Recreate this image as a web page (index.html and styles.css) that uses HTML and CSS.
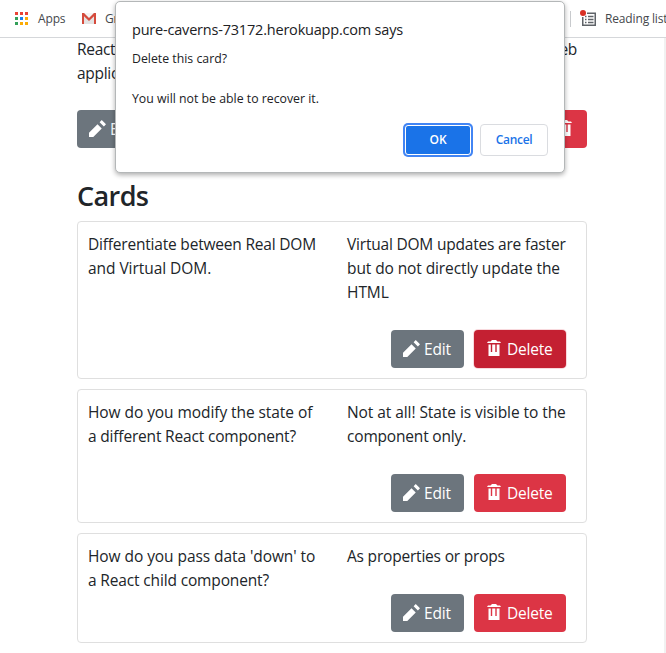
FILE: index.html
```html
<!DOCTYPE html>
<html lang="en">
<head>
<meta charset="utf-8">
<title>Deck</title>
<link rel="stylesheet" href="styles.css">
</head>
<body>
<svg class="defs" aria-hidden="true">
<symbol id="pencil" viewBox="0 0 8 8"><path d="M6 0l-1 1 2 2 1-1-2-2zm-2 2l-4 4v2h2l4-4-2-2z"/></symbol>
<symbol id="trash" viewBox="0 0 16 16"><path d="M5 0h4l1.500 1.500H13L14 3H0l1-1.500h2.500zM1.500 4.500h2.300V12h1.400V4.500h3.100V12h1.400V4.500H12.500V16h-11z"/></symbol>
</svg>
<header class="bookmarks">
<svg class="apps" width="13" height="13" viewBox="0 0 13 13" shape-rendering="crispEdges">
<path fill="#ea4335" d="M0 0h3v3H0zM5 0h3v3H5zM10 0h3v3h-3z"/>
<path fill="#34a05a" d="M0 5h3v3H0zM0 10h3v3H0z"/><path fill="#1a82f0" d="M5 5h3v3H5z"/>
<path fill="#fbab05" d="M10 5h3v3h-3zM5 10h3v3H5zM10 10h3v3h-3z"/>
</svg>
<span class="bm apps-label">Apps</span>
<svg class="gmail" width="14" height="11" viewBox="0 0 14 11"><path fill="#e3e3e3" d="M1 0h12v11H1z"/><path fill="#f5f5f5" d="M2 0h10L7 5z"/><path fill="#d54b3d" d="M0 0h2l5 5 5-5h2v11h-2V3.300L7 8 2 3.300V11H0z"/></svg>
<span class="bm">Gmail</span>
<span class="divider"></span>
<svg class="reading" width="17" height="17" viewBox="0 0 17 17"><path fill="none" stroke="#5f6368" stroke-width="1.500" d="M7 3.250h8.250v12H2.750V7"/><path stroke="#5f6368" stroke-width="1.300" d="M5 6.500h1.500M8 6.500h5.500M5 9.500h1.500M8 9.500h5.500M5 12.500h1.500M8 12.500h5.500"/><circle cx="3" cy="3" r="3" fill="#d93025"/></svg>
<span class="bm reading-label">Reading list</span>
</header>
<main>
<div class="intro"><span class="line">React</span><span class="line">web</span></div>
<div class="intro"><span class="line">application</span></div>
<div class="deck-actions">
<button class="btn edit"><svg><use href="#pencil"/></svg><span>Edit</span></button>
<button class="btn delete icon-only"><svg><use href="#trash"/></svg></button>
</div>
<h2>Cards</h2>
<article class="card tall">
<p class="front"><span class="line l1">Differentiate between Real DOM</span><span class="line l2">and Virtual DOM.</span></p>
<p class="back"><span class="line l3">Virtual DOM updates are faster</span><span class="line l4">but do not directly update the</span><span class="line l5">HTML</span></p>
<div class="actions"><button class="btn edit"><svg><use href="#pencil"/></svg><span>Edit</span></button><button class="btn delete active"><svg><use href="#trash"/></svg><span>Delete</span></button></div>
</article>
<article class="card medium">
<p class="front"><span class="line l6">How do you modify the state of</span><span class="line l7">a different React component?</span></p>
<p class="back"><span class="line l8">Not at all! State is visible to the</span><span class="line l9">component only.</span></p>
<div class="actions"><button class="btn edit"><svg><use href="#pencil"/></svg><span>Edit</span></button><button class="btn delete"><svg><use href="#trash"/></svg><span>Delete</span></button></div>
</article>
<article class="card short">
<p class="front"><span class="line l10">How do you pass data 'down' to</span><span class="line l11">a React child component?</span></p>
<p class="back"><span class="line l12">As properties or props</span></p>
<div class="actions"><button class="btn edit"><svg><use href="#pencil"/></svg><span>Edit</span></button><button class="btn delete"><svg><use href="#trash"/></svg><span>Delete</span></button></div>
</article>
</main>
<div class="scrollbar"></div>
<section class="dialog" role="dialog">
<h1>pure-caverns-73172.herokuapp.com says</h1>
<p>Delete this card?</p>
<p class="second">You will not be able to recover it.</p>
<div class="dialog-actions"><button class="ok">OK</button><button class="cancel">Cancel</button></div>
</section>
</body>
</html>
```
FILE: styles.css
```css
* { box-sizing: border-box; }
body { margin: 0; width: 666px; height: 653px; overflow: hidden; position: relative; background: #fff; color: #212529; font: 15.5px/24px "Open Sans", "Noto Sans", sans-serif; }
button { font: inherit; margin: 0; }
p, h1, h2 { margin: 0; }
.defs { display: none; }
.bookmarks { height: 38px; border-bottom: 1px solid #d5d7da; display: flex; align-items: center; padding-left: 15px; overflow: hidden; }
.bookmarks svg { flex: none; }
.bm { font-size: 12px; color: #45484c; white-space: nowrap; letter-spacing: -.15px; }
.apps-label { margin-left: 10px; width: 44px; }
.gmail { margin-right: 9px; }
.divider { width: 1px; height: 16px; background: #c8cacd; margin-left: auto; flex: none; }
.reading { margin-left: 9px; margin-right: 8px; }
.reading-label { width: 61px; flex: none; }
main { width: 510px; margin-left: 77px; }
.line { display: block; width: max-content; white-space: nowrap; letter-spacing: -.3px; }
.l1, .l3, .l12 { letter-spacing: -.2px; }
.l2, .l5 { letter-spacing: -.05px; }
.l4 { letter-spacing: -.1px; }
.l6, .l8, .l10 { letter-spacing: -.07px; }
.l7, .l9 { letter-spacing: -.18px; }
.l11 { letter-spacing: -.15px; }
.intro { display: flex; justify-content: space-between; padding-right: 10px; position: relative; top: -1px; }
.deck-actions { display: flex; justify-content: space-between; margin-top: 24px; }
h2 { font-size: 27px; line-height: 34px; font-weight: 600; margin: 31px 0 8px; letter-spacing: -.6px; }
.card { border: 1px solid #dfdfdf; border-radius: 4px; display: grid; grid-template-columns: 259px 1fr; grid-template-rows: 1fr 38px; padding: 10px 20px 10px 10px; margin-bottom: 10px; }
.tall { height: 158px; }
.medium { height: 134px; }
.short { height: 110px; }
.actions { grid-column: 1 / 3; display: flex; justify-content: flex-end; gap: 10px; }
.btn { display: flex; align-items: center; height: 38px; width: 73px; border: 0; border-radius: 4px; padding: 0 0 0 12px; color: #fff; white-space: nowrap; letter-spacing: -.2px; }
.btn svg { width: 17px; height: 17px; fill: currentColor; margin-right: 4px; flex: none; position: relative; top: -1px; }
.edit { background: #6c757d; }
.delete { background: #dc3545; width: 92px; padding-left: 13px; }
.delete svg { width: 16px; height: 16px; }
.active { background: #c42032; box-shadow: 0 0 0 1px #f8d9dd; }
.icon-only { width: 40px; padding-left: 11px; }
.scrollbar { position: absolute; right: 0; top: 38px; width: 2px; height: 615px; background: #f1f1f1; }
.dialog { position: absolute; left: 115px; top: 1px; width: 450px; height: 172px; background: #fff; border: 1px solid #b4b7b8; border-radius: 5px; box-shadow: 0 2px 5px rgba(0,0,0,.32); padding: 17px 16px; color: #202124; }
.dialog h1 { font-size: 14.5px; line-height: 22px; font-weight: 400; letter-spacing: -.2px; white-space: nowrap; }
.dialog p { font-size: 12.3px; line-height: 20px; margin-top: 8px; letter-spacing: 0; white-space: nowrap; }
.dialog .second { margin-top: 20px; }
.dialog-actions { display: flex; align-items: center; justify-content: flex-end; gap: 9px; margin-top: 15px; }
.ok, .cancel { font-size: 12px; font-weight: 600; height: 32px; border-radius: 4px; padding: 0; }
.ok { width: 66px; height: 30px; color: #fff; background: #1a73e8; border: 1px solid #fff; border-radius: 3px; box-shadow: 0 0 0 2px #4285f4; }
.cancel { width: 68px; color: #1a73e8; background: #fff; border: 1px solid #dadce0; letter-spacing: -.3px; }
```
